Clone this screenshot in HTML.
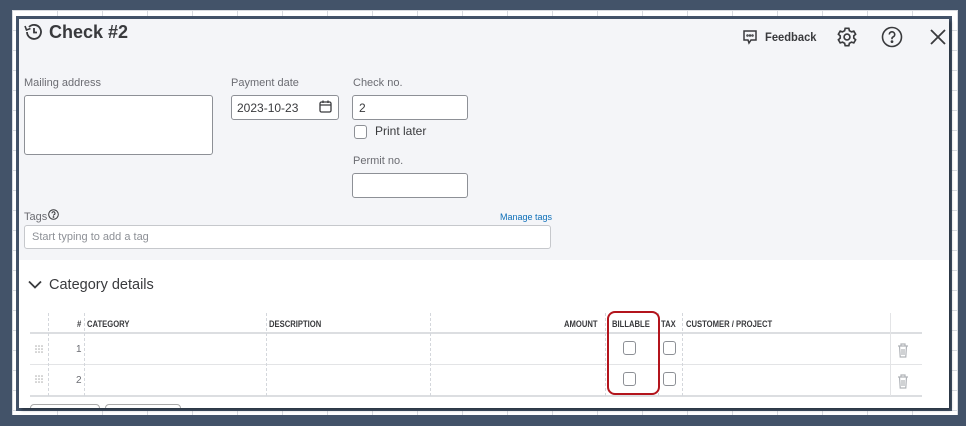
<!DOCTYPE html>
<html><head><style>
*{box-sizing:border-box;margin:0;padding:0}
body{width:966px;height:426px;background:#435369;position:relative;overflow:hidden;font-family:"Liberation Sans",sans-serif;color:#393a3d}
.strip{position:absolute;left:12px;top:10px;width:946px;height:405px;background:#fff;
background-image:linear-gradient(90deg,#d8dbe0 1px,transparent 1px),linear-gradient(#d8dbe0 1px,transparent 1px);background-size:45px 20px}
.frame{position:absolute;left:16px;top:16px;width:936px;height:395px;background:#435369}
.dlg{position:absolute;left:19px;top:19px;width:930px;height:389px;background:#fff;overflow:hidden;box-shadow:2px 2px 3px rgba(0,0,0,.4)}
.top{position:absolute;left:0;top:0;width:930px;height:241px;background:#f4f5f8}
.a{position:absolute}
.lbl{font-size:11px;color:#6b6c72}
.inp{position:absolute;background:#fff;border:1px solid #8d9096;border-radius:3px}
.th{position:absolute;top:300px;font-size:9px;color:#393a3d;font-weight:bold;transform:scaleX(.85);transform-origin:left}
.vl{position:absolute;border-left:1px dashed #d4d7dc}
.cb{position:absolute;width:13px;height:14px;border:1px solid #8d9096;border-radius:3px;background:#fff}
.num{position:absolute;font-size:10px;color:#6b6c72}
</style></head><body>
<div class="strip"></div>
<div class="frame"></div>
<div class="dlg">
<div class="top"></div>
<svg class="a" style="left:4px;top:3px" width="20" height="20" viewBox="0 0 20 20" fill="none" stroke="#393a3d" stroke-width="1.8"><path d="M4 10a7 7 0 1 0 2-5"/><path d="M2 4l1.5 4 4-1.5" stroke-width="1.6"/><path d="M11 6v4.5h3"/></svg>
<div class="a" style="left:30px;top:3px;font-size:18px;font-weight:bold;color:#393a3d">Check #2</div>
<svg class="a" style="left:723px;top:10px" width="16" height="16" viewBox="0 0 16 16" fill="none" stroke="#393a3d" stroke-width="1.5"><path d="M2 2h12v9H9l-2 3-1-3H2z"/><circle cx="5.5" cy="6.5" r=".5"/><circle cx="8" cy="6.5" r=".5"/><circle cx="10.5" cy="6.5" r=".5"/></svg>
<div class="a" style="left:746px;top:11px;font-size:12px;font-weight:bold;color:#393a3d;transform:scaleX(.93);transform-origin:left">Feedback</div>
<svg class="a" style="left:817px;top:7px" width="22" height="22" viewBox="0 0 24 24" fill="none" stroke="#393a3d" stroke-width="1.8"><circle cx="12" cy="12" r="3.2"/><path d="M10 2.5h4l.6 2.6 2.3 1.3 2.5-.8 2 3.4-2 1.8v2.4l2 1.8-2 3.4-2.5-.8-2.3 1.3-.6 2.6h-4l-.6-2.6-2.3-1.3-2.5.8-2-3.4 2-1.8v-2.4l-2-1.8 2-3.4 2.5.8 2.3-1.3z"/></svg>
<svg class="a" style="left:862px;top:7px" width="22" height="22" viewBox="0 0 22 22" fill="none" stroke="#393a3d" stroke-width="1.6"><circle cx="11" cy="11" r="9.5"/><path d="M8.3 8.5a2.7 2.7 0 1 1 3.7 2.5c-.7.3-1 .8-1 1.6v.6"/><circle cx="11" cy="15.6" r=".6" fill="#393a3d"/></svg>
<svg class="a" style="left:911px;top:10px" width="16" height="16" viewBox="0 0 16 16" stroke="#393a3d" stroke-width="1.8"><path d="M1 1l14 14M15 1L1 15"/></svg>

<div class="a lbl" style="left:5px;top:58px">Mailing address</div>
<div class="inp" style="left:5px;top:76px;width:189px;height:60px"></div>
<div class="a lbl" style="left:212px;top:58px">Payment date</div>
<div class="inp" style="left:212px;top:76px;width:108px;height:25px"></div>
<div class="a" style="left:218px;top:82px;font-size:12px;color:#393a3d">2023-10-23</div>
<svg class="a" style="left:300px;top:81px" width="13" height="13" viewBox="0 0 13 13" fill="none" stroke="#393a3d" stroke-width="1.3"><rect x="1" y="2" width="11" height="10" rx="1.5"/><path d="M1 5h11M4 0.5v2.5M9 0.5v2.5"/></svg>
<div class="a lbl" style="left:334px;top:58px">Check no.</div>
<div class="inp" style="left:333px;top:76px;width:116px;height:25px"></div>
<div class="a" style="left:340px;top:82px;font-size:12px">2</div>
<div class="cb" style="left:335px;top:106px"></div>
<div class="a" style="left:356px;top:105px;font-size:12px;color:#393a3d">Print later</div>
<div class="a lbl" style="left:334px;top:136px">Permit no.</div>
<div class="inp" style="left:333px;top:154px;width:116px;height:25px"></div>
<div class="a lbl" style="left:5px;top:192px">Tags</div>
<svg class="a" style="left:29px;top:190px" width="11" height="11" viewBox="0 0 11 11" fill="none" stroke="#393a3d" stroke-width="1"><circle cx="5.5" cy="5.5" r="4.8"/><path d="M4 4.3a1.5 1.5 0 1 1 2 1.4c-.4.2-.5.4-.5.9"/><circle cx="5.5" cy="8" r=".4"/></svg>
<div class="a" style="left:481px;top:193px;font-size:9px;color:#0d6fb8">Manage tags</div>
<div class="inp" style="left:5px;top:206px;width:527px;height:24px;border-color:#c6c8cc"></div>
<div class="a" style="left:13px;top:212px;font-size:11px;color:#8d9096">Start typing to add a tag</div>

<svg class="a" style="left:9px;top:261px" width="14" height="10" viewBox="0 0 14 10" fill="none" stroke="#393a3d" stroke-width="1.8"><path d="M1 1.5l6 6 6-6"/></svg>
<div class="a" style="left:30px;top:258px;font-size:14.5px;color:#393a3d">Category details</div>

<div class="a" style="left:11px;top:313px;width:892px;height:2px;background:#dcdee1"></div>
<div class="a" style="left:11px;top:345px;width:892px;height:1px;background:#e3e4e6"></div>
<div class="a" style="left:11px;top:376px;width:892px;height:2px;background:#dcdee1"></div>
<div class="vl" style="left:29px;top:294px;height:83px"></div>
<div class="vl" style="left:65px;top:294px;height:83px"></div>
<div class="vl" style="left:247px;top:294px;height:83px"></div>
<div class="vl" style="left:411px;top:294px;height:83px"></div>
<div class="vl" style="left:586px;top:294px;height:83px"></div>
<div class="vl" style="left:639px;top:294px;height:83px"></div>
<div class="vl" style="left:663px;top:294px;height:83px"></div>
<div class="vl" style="left:871px;top:294px;height:83px;border-left-style:solid;border-color:#e3e4e6"></div>
<div class="th" style="left:58px">#</div>
<div class="th" style="left:68px">CATEGORY</div>
<div class="th" style="left:250px">DESCRIPTION</div>
<div class="th" style="left:545px">AMOUNT</div>
<div class="th" style="left:593px">BILLABLE</div>
<div class="th" style="left:642px">TAX</div>
<div class="th" style="left:667px">CUSTOMER / PROJECT</div>
<div class="a" style="left:588px;top:292px;width:53px;height:84px;border:2px solid #b3141c;border-radius:8px"></div>
<svg class="a" style="left:16px;top:326px" width="8" height="8" viewBox="0 0 8 8" fill="#aaa"><circle cx="1" cy="1" r=".8"/><circle cx="4" cy="1" r=".8"/><circle cx="7" cy="1" r=".8"/><circle cx="1" cy="4" r=".8"/><circle cx="4" cy="4" r=".8"/><circle cx="7" cy="4" r=".8"/><circle cx="1" cy="7" r=".8"/><circle cx="4" cy="7" r=".8"/><circle cx="7" cy="7" r=".8"/></svg>
<svg class="a" style="left:16px;top:356px" width="8" height="8" viewBox="0 0 8 8" fill="#aaa"><circle cx="1" cy="1" r=".8"/><circle cx="4" cy="1" r=".8"/><circle cx="7" cy="1" r=".8"/><circle cx="1" cy="4" r=".8"/><circle cx="4" cy="4" r=".8"/><circle cx="7" cy="4" r=".8"/><circle cx="1" cy="7" r=".8"/><circle cx="4" cy="7" r=".8"/><circle cx="7" cy="7" r=".8"/></svg>
<div class="num" style="left:57px;top:325px">1</div>
<div class="num" style="left:57px;top:356px">2</div>
<div class="cb" style="left:604px;top:322px"></div>
<div class="cb" style="left:644px;top:322px"></div>
<div class="cb" style="left:604px;top:353px"></div>
<div class="cb" style="left:644px;top:353px"></div>
<svg class="a" style="left:878px;top:324px" width="12" height="15" viewBox="0 0 12 15" fill="none" stroke="#b0b3b8" stroke-width="1.2"><path d="M1 3h10M4 3V1h4v2M2.5 3l.7 11h5.6l.7-11M5 6v6M7 6v6"/></svg>
<svg class="a" style="left:878px;top:355px" width="12" height="15" viewBox="0 0 12 15" fill="none" stroke="#b0b3b8" stroke-width="1.2"><path d="M1 3h10M4 3V1h4v2M2.5 3l.7 11h5.6l.7-11M5 6v6M7 6v6"/></svg>
<div class="a" style="left:11px;top:385px;width:70px;height:12px;border:1px solid #aaa;border-radius:4px"></div>
<div class="a" style="left:86px;top:385px;width:76px;height:12px;border:1px solid #aaa;border-radius:4px"></div>
</div>
</body></html>
